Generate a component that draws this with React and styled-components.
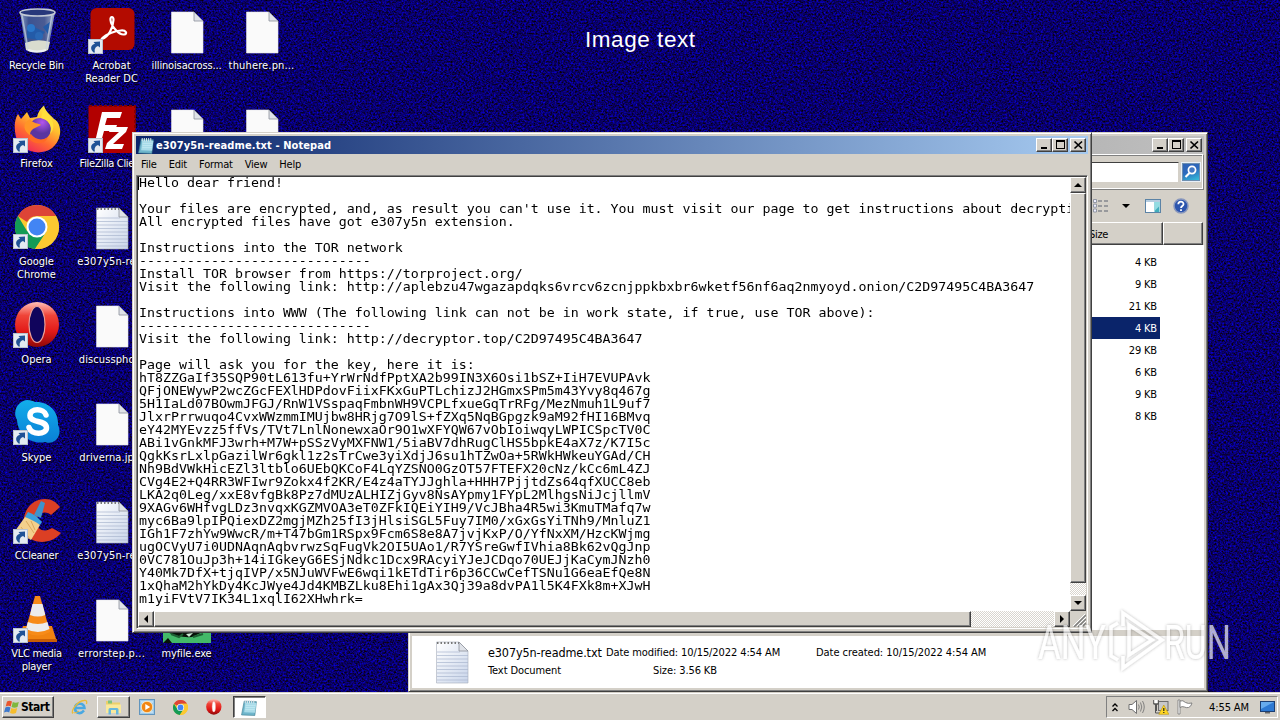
import React from "react";
import styled, { createGlobalStyle, css } from "styled-components";

const face = "#d4d0c8";
const ui = `"DejaVu Sans Condensed", "DejaVu Sans", sans-serif`;

const GlobalStyle = createGlobalStyle`
  * { box-sizing: border-box; }
  html, body { margin: 0; padding: 0; overflow: hidden; }
  svg { display: block; flex: none; }
`;

const raised = css`
  background: ${face};
  border: 1px solid;
  border-color: #fff #404040 #404040 #fff;
  box-shadow: inset -1px -1px #808080;
`;
const sunken = css`
  border: 1px solid;
  border-color: #808080 #fff #fff #808080;
`;

const Screen = styled.div`
  width: 1280px;
  height: 720px;
  display: flex;
  flex-direction: column;
  position: relative;
  overflow: hidden;
  background: #07005c;
  font: 11px/13px ${ui};
  color: #000;
  cursor: default;
`;
const Wallpaper = styled.svg`
  position: absolute;
  inset: 0;
`;
const Desktop = styled.main`
  flex: 1;
  position: relative;
`;
const IconGrid = styled.div`
  display: grid;
  grid-template-columns: repeat(4, 75px);
  grid-template-rows: repeat(7, 98px);
  margin-left: -1px;
`;
const Shortcut = styled.div`
  grid-column: ${(p) => p.$col};
  grid-row: ${(p) => p.$row};
  display: flex;
  flex-direction: column;
  align-items: center;
  padding-top: 7px;
  color: #fff;
  text-align: center;
  text-shadow: 1px 1px 1px #000;
`;
const Caption = styled.div`
  margin-top: 4px;
  white-space: pre;
  letter-spacing: ${(p) => p.$ls || 0}px;
`;
const Banner = styled.div`
  position: absolute;
  top: 26px;
  left: 585px;
  font: 22.5px/28px "Liberation Sans", sans-serif;
  letter-spacing: 0.55px;
  color: #fff;
  white-space: nowrap;
`;

const Window = styled.section`
  position: absolute;
  left: ${(p) => p.$x}px;
  top: ${(p) => p.$y}px;
  width: ${(p) => p.$w}px;
  height: ${(p) => p.$h}px;
  display: flex;
  flex-direction: column;
  background: ${face};
  border: 1px solid;
  border-color: ${face} #404040 #404040 ${face};
  box-shadow: inset 1px 1px #fff, inset -1px -1px #808080;
  padding: 3px;
`;
const TitleBar = styled.header`
  flex: none;
  height: 18px;
  display: flex;
  align-items: center;
  padding: 0 2px 0 2px;
  background: ${(p) =>
    p.$active
      ? "linear-gradient(90deg, #0a246a, #a6caf0)"
      : "linear-gradient(90deg, #808080, #c0c0c0)"};
  color: #fff;
`;
const Title = styled.h1`
  flex: 1;
  margin: 0 0 0 1px;
  font: bold 11px/13px ${ui};
  letter-spacing: 0.11px;
  white-space: nowrap;
`;
const CaptionButton = styled.button`
  ${raised}
  width: 16px;
  height: 14px;
  padding: 0;
  margin-left: ${(p) => (p.$gap ? 2 : 0)}px;
  display: grid;
  place-items: center;
`;
const MenuBar = styled.nav`
  flex: none;
  height: 21px;
  display: flex;
  align-items: center;
  gap: 12px;
  padding: 0 0 1px 5px;
`;
const MenuItem = styled.span`
  letter-spacing: -0.2px;
`;
const Editor = styled.div`
  flex: 1;
  display: grid;
  grid-template-columns: 1fr 16px;
  grid-template-rows: 1fr 16px;
  border: 1px solid;
  border-color: #808080 #fff #fff #808080;
  box-shadow: inset 1px 1px #404040, inset -1px -1px ${face};
  padding: 1px;
  min-height: 0;
`;
const Page = styled.div`
  background: #fff;
  overflow: hidden;
  padding: 0 0 0 1px;
  position: relative;
  min-width: 0;
`;
const Document = styled.pre`
  margin: 0;
  width: 785px;
  font: 11.4px/13px "DejaVu Sans Mono", monospace;
  transform: scaleX(1.1656);
  transform-origin: 0 0;
  color: #000;
`;
const Caret = styled.span`
  position: absolute;
  left: 0;
  top: 0;
  width: 1px;
  height: 13px;
  background: #000;
`;
const Track = styled.div`
  display: flex;
  flex-direction: ${(p) => (p.$vertical ? "column" : "row")};
  background: repeating-conic-gradient(#fff 0 25%, #d9d5ce 0 50%) 0 0 / 2px 2px;
`;
const ScrollButton = styled.button`
  ${raised}
  width: 16px;
  height: 16px;
  padding: 0;
  flex: none;
  display: grid;
  place-items: center;
`;
const Thumb = styled.div`
  ${raised}
  flex: 0 0 ${(p) => p.$size}px;
`;
const Spacer = styled.div`
  flex: 1;
`;
const Corner = styled.div`
  background: ${face};
  display: grid;
  place-items: end;
`;

const AddressRow = styled.div`
  flex: none;
  height: 36px;
  margin-top: 0;
  display: flex;
  align-items: center;
  justify-content: flex-end;
  gap: 2px;
  padding-right: 2px;
  ${sunken}
  border-color: #fff #808080 #808080 #fff;
  box-shadow: inset -1px -1px #fff, inset 0 1px #808080;
`;
const SearchBox = styled.div`
  width: 230px;
  height: 21px;
  background: #fff;
  ${sunken}
  border-color: #404040 ${face} ${face} #404040;
`;
const SearchButton = styled.div`
  width: 20px;
  height: 20px;
  display: grid;
  place-items: center;
  border: 1px solid #e8f0f8;
  outline: 1px solid #6d8fb0;
  outline-offset: -2px;
  background: linear-gradient(160deg, #2f62b4, #2b69bd 45%, #35c8dc);
`;
const ToolRow = styled.div`
  flex: none;
  height: 32px;
  display: flex;
  align-items: center;
  justify-content: flex-end;
  padding: 0 15px 1px 0;
`;
const ColumnRow = styled.div`
  flex: none;
  height: 23px;
  display: flex;
  justify-content: flex-end;
  padding-right: 1px;
`;
const ColumnHead = styled.div`
  ${raised}
  width: ${(p) => p.$w}px;
  padding: 5px 0 0 5px;
  letter-spacing: -0.3px;
`;
const FileList = styled.div`
  flex: none;
  height: 385px;
  background: #fff;
  padding: 6px 44px 0 0;
`;
const FileSize = styled.div`
  height: 22px;
  padding-right: 3px;
  line-height: 23px;
  text-align: right;
  letter-spacing: -0.15px;
  ${(p) => p.$selected && "background:#0a246a;color:#fff;"}
`;
const Details = styled.div`
  flex: 1;
  display: flex;
  align-items: flex-start;
  background: #fff;
  border-top: 6px solid ${face};
  padding: 1px 0 0 16px;
`;
const DetailColumn = styled.div`
  width: ${(p) => p.$w}px;
  margin-left: ${(p) => p.$ml || 0}px;
  padding-top: 5px;
  white-space: nowrap;
`;
const DetailLine = styled.div`
  height: 18px;
  line-height: 22px;
  padding-left: ${(p) => p.$pl || 0}px;
  font-size: ${(p) => p.$size || 11}px;
  letter-spacing: ${(p) => p.$ls ?? -0.1}px;
`;

const TaskBar = styled.footer`
  flex: none;
  height: 28px;
  position: relative;
  display: flex;
  align-items: center;
  background: ${face};
  box-shadow: inset 0 1px ${face}, inset 0 2px #fff;
  padding: 4px 2px 2px;
`;
const StartButton = styled.button`
  ${raised}
  width: 52px;
  height: 22px;
  display: flex;
  align-items: center;
  gap: 1px;
  padding: 0 0 0 1px;
  font: bold 12px/14px ${ui};
  letter-spacing: -0.45px;
  color: #000;
`;
const TaskButton = styled.div`
  width: ${(p) => (p.$framed ? 33 : 16)}px;
  height: 22px;
  margin-left: ${(p) => p.$ml}px;
  display: grid;
  place-items: center;
  ${(p) => p.$framed && raised}
  ${(p) =>
    p.$pressed &&
    css`
      background: #fff;
      border-color: #404040 #fff #fff #404040;
      box-shadow: inset 1px 1px #808080;
    `}
`;
const Tray = styled.div`
  ${sunken}
  width: 172px;
  height: 22px;
  display: flex;
  align-items: center;
  padding-left: 5px;
`;
const Clock = styled.span`
  margin: 0 10px 0 16px;
  width: 41px;
  white-space: nowrap;
  letter-spacing: -0.1px;
`;
const Watermark = styled.svg`
  position: absolute;
  left: 1032px;
  top: 602px;
`;

/* ---------- icons ---------- */

const Arrow = ({ y = 31 }) => (
  <g transform={`translate(0 ${y})`}>
    <rect x=".5" y=".5" width="14" height="14" fill="#e4eaf1" stroke="#b9c3ce" />
    <path d="M5.500 13.500C1.500 10 3 5.500 7 4.800L5.500 3 12 2.500 12 8.500 10 7C7 8 6 11 7 13.500Z" fill="#1f5296" />
  </g>
);

const BinIcon = () => (
  <svg width="48" height="48" viewBox="0 0 48 48">
    <defs>
      <linearGradient id="bin" x2="1">
        <stop offset="0" stopColor="#8ea3c4" /><stop offset=".25" stopColor="#3c5290" />
        <stop offset=".7" stopColor="#4a5b93" /><stop offset="1" stopColor="#9fb0cc" />
      </linearGradient>
    </defs>
    <path d="M7 5L13 43Q24 48 35 43L42 5Z" fill="url(#bin)" />
    <path d="M12 36L13 43Q24 48 35 43L37 35Q24 31 12 36Z" fill="#d9dccf" />
    <path d="M14 23q5-8 9-2l9 4-7 8-11-2zM30 20l7-5-2 12z" fill="#235ba8" />
    <circle cx="18" cy="21" r="4" fill="#2b77c8" /><circle cx="26" cy="29" r="4" fill="#2a68b4" />
    <path d="M9 8l6 34M39 8l-6 34" stroke="#c7d3e4" strokeWidth="1.500" fill="none" opacity=".7" />
    <ellipse cx="24.500" cy="5.500" rx="17.500" ry="3.500" fill="#27387b" stroke="#c3cad5" strokeWidth="1.600" />
    <path d="M15 43q9 3 18 0" stroke="#eef0f0" strokeWidth="2" fill="none" />
  </svg>
);
const AcrobatIcon = () => (
  <svg width="48" height="48" viewBox="0 0 48 48">
    <rect x="2.500" y="1" width="44" height="42" rx="6" fill="#b30b00" />
    <path d="M14 32C20 30 25 22 25.500 13C25.700 9 22 9 22.500 13C23 19 31 28 36 27.500C40 27 38 23 33 23.500C27 24 18 27 14.500 31C12 34 12 35 14 32Z" fill="none" stroke="#fff" strokeWidth="2.200" strokeLinejoin="round" />
    <Arrow y={32} />
  </svg>
);
const FirefoxIcon = ({ size = 48 }) => (
  <svg width={size} height={size} viewBox="0 0 48 48">
    <defs>
      <linearGradient id="ff" x1=".8" y1="0" x2=".2" y2="1">
        <stop offset="0" stopColor="#fff24a" /><stop offset=".35" stopColor="#ffc02e" />
        <stop offset=".65" stopColor="#ff6a30" /><stop offset="1" stopColor="#ee1d62" />
      </linearGradient>
      <radialGradient id="ffp" cx=".6" cy=".2"><stop offset="0" stopColor="#b455ee" /><stop offset="1" stopColor="#5a35a0" /></radialGradient>
    </defs>
    <path d="M5 9L8 14 14 7 17 13 24 12C25 7 28 3 31 .5C32 7 37 9 41 14C45 16 48 22 47 29C43 54 9 52 3 32C1 24 1 15 5 9Z" fill="url(#ff)" />
    <circle cx="27" cy="24" r="11" fill="url(#ffp)" />
    <path d="M17 14C20 19 26 18 28 20L20 24C18 26 16 28 18 31C10 26 9 18 17 14Z" fill="#ff9626" />
    <path d="M18 29C22 35 30 36 35 32C33 39 22 41 15 33Z" fill="#ff6a25" />
    <path d="M28 13C35 15 40 20 37 29C42 24 41 17 37 12L31 2Z" fill="#ffe03c" />
    <Arrow y={33} />
  </svg>
);
const FileZillaIcon = () => (
  <svg width="48" height="48" viewBox="0 0 48 48">
    <rect x=".5" y="1" width="47" height="47" fill="#b20000" />
    <path d="M1 1H47V48" fill="none" stroke="#850000" strokeWidth="2" strokeDasharray="3 2" />
    <path d="M14 7H34L32 13H19L17 20H29L27 26H16L13 37H7ZM23 22H40L38 27 25 39H36L34 44H17L19 38 31 27H21Z" fill="#fff" />
    <Arrow y={33} />
  </svg>
);
const ChromeIcon = ({ size = 48, link }) => (
  <svg width={size} height={size} viewBox={link ? "0 0 48 48" : "2 2 44 44"}>
    <circle cx="24" cy="24" r="22" fill="#fbc931" />
    <path d="M4.900 13A22 22 0 0 1 43.100 13H24A11 11 0 0 0 14 19Z" fill="#dd4437" />
    <path d="M4.900 13A22 22 0 0 0 22 46L33 29 24 24 14 28Z" fill="#139b56" />
    <path d="M33.500 29.500 22 46A22 22 0 0 0 43.100 13H24Z" fill="#fbc931" />
    <circle cx="24" cy="24" r="10.500" fill="#fff" /><circle cx="24" cy="24" r="8.500" fill="#4285f4" />
    {link && <Arrow y={31} />}
  </svg>
);
const OperaIcon = ({ size = 48, link }) => (
  <svg width={size} height={size} viewBox={link ? "0 0 48 48" : "2 1 45 46"}>
    <defs>
      <linearGradient id="op" x2="0" y2="1">
        <stop offset="0" stopColor="#ffc0b8" /><stop offset=".3" stopColor="#ef4438" />
        <stop offset=".65" stopColor="#e21a18" /><stop offset="1" stopColor="#8f0808" />
      </linearGradient>
    </defs>
    <ellipse cx="24" cy="23.500" rx="22" ry="22.500" fill="url(#op)" />
    <ellipse cx="24" cy="23.500" rx={link ? 8 : 5} ry={link ? 18 : 15} fill={link ? "#10045c" : "#fff"} stroke="#e9a098" strokeWidth="1.200" />
    {link && <Arrow y={32} />}
  </svg>
);
const SkypeIcon = () => (
  <svg width="48" height="48" viewBox="0 0 48 48">
    <defs><linearGradient id="sk" x2="0" y2="1"><stop offset="0" stopColor="#12aeea" /><stop offset="1" stopColor="#0a7fd6" /></linearGradient></defs>
    <path d="M14 1C18 1 20 2 22 3C35 2 46 12 45 26C50 36 42 47 32 43C18 46 5 36 4 21C-1 12 5 2 14 1Z" fill="url(#sk)" />
    <path d="M33 16C31 9 17 9 17 16.500C17 25 33.500 20 33.500 29C33.500 36 18 36 16 28.500" fill="none" stroke="#fff" strokeWidth="5.500" strokeLinecap="round" />
    <Arrow y={31} />
  </svg>
);
const CCleanerIcon = () => (
  <svg width="48" height="48" viewBox="0 0 48 48">
    <path d="M47 10L38 18C32 13 24 16 23.500 24C23 33 32 36 39 31L48 36C39 47 21 48 14 38C5 21 15 2 32 2C39 2 43 5 47 10Z" fill="#db3f24" />
    <path d="M28 4L32 6 28 21 21 18Z" fill="#3f93cb" />
    <path d="M15 15Q22 17 29 25L27 28Q18 24 12 20Z" fill="#3aa0dd" />
    <path d="M12 20Q22 24 27 28L18 43 2 34Z" fill="#f3d08c" />
    <path d="M8 30l9 12M13 24l8 12M18 24l4 9" stroke="#dba85c" fill="none" />
    <Arrow y={32} />
  </svg>
);
const VlcIcon = () => (
  <svg width="48" height="48" viewBox="0 0 48 48">
    <path d="M10 31H39L44 47H4Z" fill="#f08310" />
    <path d="M4 44H44V47H4Z" fill="#c95e05" />
    <path d="M22 1H27L37 37Q25 44 12 37Z" fill="#f78b18" />
    <path d="M19.500 9H29.500L32.300 20Q25 23 17 20ZM14.800 27Q25 31 34.500 27L36.500 34Q25 40 13 34Z" fill="#ececec" />
    <Arrow y={33} />
  </svg>
);
const FileIcon = ({ lined }) => (
  <svg width="48" height="48" viewBox="0 0 48 48">
    <defs><linearGradient id="ln" x2="1" y2="1"><stop offset="0" stopColor="#fff" /><stop offset="1" stopColor="#c9d5ea" /></linearGradient></defs>
    <path d="M8.500 5H31L40 14V46H8.500Z" fill={lined ? "url(#ln)" : "#fafafa"} stroke={lined ? "#a5abb8" : "#e4e4ea"} strokeWidth=".6" />
    {lined && <path d="M9 15H32M9 18.500H40M9 22H40M9 25.500H40M9 29H40M9 32.500H40M9 36H40M9 39.500H40M9 43H40" stroke="#a9b6cf" strokeWidth=".7" />}
    {lined && <path d="M9 6H31" stroke="#777" strokeWidth="2" strokeDasharray="1.500 2" />}
    <path d="M31 5V14H40Z" fill="#dfe2e8" stroke="#8b909a" strokeWidth=".8" />
  </svg>
);
const ExeIcon = () => (
  <svg width="48" height="48" viewBox="0 0 48 48">
    <rect width="48" height="48" fill="#43b968" />
    <path d="M4 37Q16 43 29 42L44 35 31 36 20 37ZM0 48L5 43 9 48Z" fill="#071109" />
    <path d="M8 39l8 3 4-3M30 42l10-3" stroke="#1d5f33" strokeWidth="2" fill="none" />
    <path d="M23 39l7-1-4 4z" fill="#c9e8d2" />
  </svg>
);
const NotepadIcon = ({ size = 16 }) => (
  <svg width={size} height={size} viewBox="0 0 16 16">
    <path d="M3 2L14.500 2.500 13 15.500 .5 15Z" fill="#6fb6cc" stroke="#407f92" strokeWidth=".6" />
    <path d="M4 3.500L14.500 3.800 13.200 13 3 12.500Z" fill="#a8dbe8" />
    <path d="M4.500 6H13.500M4.300 8H13.200M4 10H13" stroke="#c9eef5" strokeWidth=".6" />
    <path d="M4 1v3M6 1v3M8 1v3M10 1v3M12 1v3" stroke="#e5e9ec" strokeWidth=".9" />
  </svg>
);
const Glyph = {
  min: <path d="M2 8H8" stroke="#000" strokeWidth="2" />,
  max: <path d="M1 0H10V9H1ZM2 2V8H9V2Z" fill="#000" fillRule="evenodd" />,
  close: <path d="M1.500 1.500L9 8.500M9 1.500L1.500 8.500" stroke="#000" strokeWidth="1.700" />,
};
const Controls = () =>
  ["min", "max", "close"].map((k) => (
    <CaptionButton key={k} $gap={k === "close"}>
      <svg width="11" height="10">{Glyph[k]}</svg>
    </CaptionButton>
  ));
const Tri = ({ r }) => (
  <svg width="8" height="8" viewBox="0 0 8 8">
    <path d="M4 2L8 6H0Z" transform={`rotate(${r} 4 4)`} />
  </svg>
);
const MagnifierIcon = () => (
  <svg width="14" height="14" viewBox="0 0 14 14">
    <circle cx="8" cy="5" r="3.600" fill="#4379c3" stroke="#fff" strokeWidth="1.700" />
    <path d="M5.500 8L1.500 12" stroke="#fff" strokeWidth="2.200" />
  </svg>
);
const ViewIcon = () => (
  <svg width="16" height="14" viewBox="0 0 16 14">
    <path d="M.5 .5h3v3h-3zM.5 5.200h3v3h-3zM.5 10h3v3h-3z" fill="#eef" stroke="#7f8796" strokeWidth=".8" />
    <path d="M5 2H9M11 2H15M5 7H9M11 7H15M5 12H9M11 12H15" stroke="#5c6270" strokeWidth="1" />
  </svg>
);
const PaneIcon = () => (
  <svg width="16" height="14" viewBox="0 0 16 14">
    <rect x=".5" y=".5" width="15" height="13" fill="#fff" stroke="#5b83a6" />
    <path d="M1 2H15" stroke="#b6cde0" strokeWidth="2" />
    <rect x="9.500" y="3" width="5" height="10" fill="#42aebd" />
    <path d="M9.500 3h5v4l-5 5z" fill="#93dce2" />
  </svg>
);
const HelpIcon = () => (
  <svg width="16" height="16" viewBox="0 0 16 16">
    <circle cx="8" cy="8" r="7" fill="#2c55ae" stroke="#8897bd" strokeWidth="1.500" />
    <path d="M5.300 6.300C5.300 2.800 10.700 2.900 10.500 6.200C10.400 8 8 8 8 10M8 11.300V13" fill="none" stroke="#fff" strokeWidth="1.800" />
  </svg>
);
const WindowsLogo = () => (
  <svg width="16" height="16" viewBox="0 0 16 16">
    <path d="M3 2.500Q5.500 1 8 2.500L6.700 7.500Q4.500 6 1.700 7.500Z" fill="#e9562c" />
    <path d="M8.800 3Q11.500 4.500 14.800 3L13.500 8Q10.500 9.300 7.500 8Z" fill="#7fb73c" />
    <path d="M1.400 8.500Q4 7 6.500 8.500L5.200 13.500Q3 12 0 13.500Z" fill="#3d79cc" />
    <path d="M7.300 9Q10 10.300 13.200 9L12 14Q9 15.300 6 14Z" fill="#f6bd2c" />
  </svg>
);
const IeIcon = () => (
  <svg width="17" height="17" viewBox="0 0 17 17">
    <path d="M13 11.500C9 16.500 3.500 13.500 4 8.500C4.600 3.500 13 3 13.500 9H5" fill="none" stroke="#49a8e2" strokeWidth="2.500" />
    <path d="M2 14.500C-1 13 6 2 13 1.500C16 1 16 3 15.500 5" fill="none" stroke="#e9bb3a" strokeWidth="1.300" />
    <path d="M2.500 13.500C4 14.500 6.500 13 8 12" fill="none" stroke="#e9bb3a" />
  </svg>
);
const FolderIcon = () => (
  <svg width="17" height="16" viewBox="0 0 17 16">
    <path d="M1 2H6L7.500 3.500H15V13H1Z" fill="#eccf6a" />
    <path d="M3 1.500h4v3H3z" fill="#7fc37b" /><path d="M1 5.500H16V14H1Z" fill="#fae99b" />
    <path d="M3.500 15.500V10.500Q3.500 9 5 9H12Q13.500 9 13.500 10.500V15.500H11V11H6V15.500Z" fill="#69b8dc" />
  </svg>
);
const MediaIcon = () => (
  <svg width="16" height="16" viewBox="0 0 16 16">
    <rect x=".5" y=".5" width="15" height="15" fill="#9fcbea" stroke="#6295bd" />
    <path d="M2 3H14M2 13H14" stroke="#dff0fb" />
    <circle cx="8" cy="8" r="5.700" fill="#f18613" stroke="#fff0c8" strokeWidth=".8" />
    <path d="M6.300 5L11.200 8 6.300 11Z" fill="#fff" />
  </svg>
);
const ChevronIcon = () => (
  <svg width="6" height="9" viewBox="0 0 6 9">
    <path d="M.5 3.500L3 1 5.500 3.500M.5 8L3 5.500 5.500 8" fill="none" stroke="#000" strokeWidth="1.300" />
  </svg>
);
const SpeakerIcon = () => (
  <svg width="17" height="16" viewBox="0 0 17 16">
    <path d="M1 5.500H4L8.500 1.500V14.500L4 10.500H1Z" fill="#fff" stroke="#6f6f6f" />
    <path d="M10.500 5.500Q12 8 10.500 10.500M12.500 3.500Q15 8 12.500 12.500M14.500 2Q18 8 14.500 14" fill="none" stroke="#777" strokeWidth=".9" />
  </svg>
);
const NetworkIcon = () => (
  <svg width="16" height="16" viewBox="0 0 16 16">
    <rect x="5.500" y="2.500" width="9.500" height="9" fill="#c8c8c8" stroke="#6d6d6d" />
    <path d="M.7 1V5H2.500V14H7M5.300 1V5H3.500V12M.7 5H5.300" fill="none" stroke="#555" />
    <path d="M1.500 1h3v3h-3z" fill="#fff" />
    <path d="M10.800 6L15.800 15.300H5.800Z" fill="#ffd723" stroke="#ba9308" strokeWidth=".6" />
    <path d="M10.800 9V12M10.800 13V14" stroke="#222" strokeWidth="1.200" />
  </svg>
);
const FlagIcon = () => (
  <svg width="16" height="16" viewBox="0 0 16 16">
    <path d="M1 1H3V15H1Z" fill="#fff" stroke="#777" strokeWidth=".8" />
    <path d="M3 2Q6 .8 8.500 3.500Q11 5 15 4Q14 8 11.500 8.500Q9 9 7.500 8Q5 7 3 8.500Z" fill="#fff" stroke="#777" strokeWidth=".9" />
  </svg>
);
const MonitorIcon = () => (
  <svg width="15" height="13" viewBox="0 0 15 13">
    <rect x=".5" y=".5" width="14" height="10" fill="#2d79d2" stroke="#1b3e72" />
    <path d="M1 1H14L1 8Z" fill="#66abed" /><path d="M5 11H10V12.500H5Z" fill="#666" />
  </svg>
);

/* ---------- content ---------- */

const desktopItems = [
  [1, 1, <BinIcon />, "Recycle Bin", -0.2],
  [1, 2, <FirefoxIcon />, "Firefox"],
  [1, 3, <ChromeIcon link />, "Google\nChrome"],
  [1, 4, <OperaIcon link />, "Opera"],
  [1, 5, <SkypeIcon />, "Skype"],
  [1, 6, <CCleanerIcon />, "CCleaner", -0.2],
  [1, 7, <VlcIcon />, "VLC media\nplayer", -0.3],
  [2, 1, <AcrobatIcon />, "Acrobat\nReader DC"],
  [2, 2, <FileZillaIcon />, "FileZilla Client", -0.35],
  [2, 3, <FileIcon lined />, "e307y5n-re...", 0.15],
  [2, 4, <FileIcon />, "discusspho...", 0.1],
  [2, 5, <FileIcon />, "driverna.jp...", 0.1],
  [2, 6, <FileIcon lined />, "e307y5n-re...", 0.15],
  [2, 7, <FileIcon />, "errorstep.p...", 0.2],
  [3, 1, <FileIcon />, "illinoisacross...", -0.15],
  [3, 2, <FileIcon />, ""],
  [3, 7, <ExeIcon />, "myfile.exe", -0.1],
  [4, 1, <FileIcon />, "thuhere.pn...", 0.15],
  [4, 2, <FileIcon />, ""],
];

const note = `Hello dear friend!

Your files are encrypted, and, as result you can't use it. You must visit our page to get instructions about decryption
All encrypted files have got e307y5n extension.

Instructions into the TOR network
-----------------------------
Install TOR browser from https://torproject.org/
Visit the following link: http://aplebzu47wgazapdqks6vrcv6zcnjppkbxbr6wketf56nf6aq2nmyoyd.onion/C2D97495C4BA3647

Instructions into WWW (The following link can not be in work state, if true, use TOR above):
-----------------------------
Visit the following link: http://decryptor.top/C2D97495C4BA3647

Page will ask you for the key, here it is:
hT8ZZGaIf35SQP90tL613fu+YrWrNdfPptXA2b99IN3X6Osi1bSZ+IiH7EVUPAvk
QFjONEWywP2wcZGcFEXlHDPdovFiixFKxGuPTLchizJ2HGmxSPm5m43Yvy8q467g
5H1IaLd07BOwmJFGJ/RnW1VSspaqFmbnWH9VCPLfxueGqTrRFg/MezNmuh1L9uf7
JlxrPrrwuqo4CvxWWzmmIMUjbw8HRjg7O9lS+fZXq5NqBGpgzk9aM92fHI16BMvq
eY42MYEvzz5ffVs/TVt7LnlNonewxaOr9O1wXFYQW67vObIoiwqyLWPICSpcTV0C
ABi1vGnkMFJ3wrh+M7W+pSSzVyMXFNW1/5iaBV7dhRugClHS5bpkE4aX7z/K7I5c
QgkKsrLxlpGazilWr6gkl1z2sTrCwe3yiXdjJ6su1hTZwOa+5RWkHWkeuYGAd/CH
Nh9BdVWkHicEZl3ltblo6UEbQKCoF4LqYZSNO0GzOT57FTEFX20cNz/kCc6mL4ZJ
CVg4E2+Q4RR3WFIwr9Zokx4f2KR/E4z4aTYJJghla+HHH7PjjtdZs64qfXUCC8eb
LKA2q0Leg/xxE8vfgBk8Pz7dMUzALHIZjGyv8NsAYpmy1FYpL2MlhgsNiJcjllmV
9XAGv6WHfvgLDz3nvqxKGZMVOA3eT0ZFkIQEiYIH9/VcJBha4R5wi3KmuTMafq7w
myc6Ba9lpIPQiexDZ2mgjMZh25fI3jHlsiSGL5Fuy7IM0/xGxGsYiTNh9/MnluZ1
IGh1F7zhYw9WwcR/m+T47bGm1RSpx9Fcm6S8e8A7jvjKxP/O/YfNxXM/HzcKWjmg
ugOCVyU7i0UDNAqnAqbvrwzSqFugVk2OI5UAo1/R7YSreGwfIVhia8Bk62vQgJnp
0VC781OuJp3h+14iIGkeyG6ESjNdkc1Dcx9RAcyiYJeJCDqo70UEJjKaCymJNzh0
Y40Mk7DfX+tjqIVP/x5NJuWVFwE6wqi1kETdTir6p36CCwCefTSNu1G6eaEfQe8N
1xQhaM2hYkDy4KcJWye4Jd4KMBZLku8Ehi1gAx3Qj39a8dvPA1l5K4FXk8m+XJwH
m1yiFVtV7IK34L1xqlI62XHwhrk=`;

const sizes = ["4 KB", "9 KB", "21 KB", "4 KB", "29 KB", "6 KB", "9 KB", "8 KB"];

const Explorer = () => (
  <Window $x={408} $y={132} $w={800} $h={560}>
    <TitleBar>
      <Title />
      <Controls />
    </TitleBar>
    <AddressRow>
      <SearchBox />
      <SearchButton><MagnifierIcon /></SearchButton>
    </AddressRow>
    <ToolRow>
      <ViewIcon />
      <svg width="36" height="8"><path d="M13 2H21L17 6Z" /></svg>
      <PaneIcon />
      <svg width="12" height="1" />
      <HelpIcon />
    </ToolRow>
    <ColumnRow>
      <ColumnHead $w={80}>Size</ColumnHead>
      <ColumnHead $w={40} />
    </ColumnRow>
    <FileList>
      {sizes.map((s, i) => (
        <FileSize key={i} $selected={i === 3}>{s}</FileSize>
      ))}
    </FileList>
    <Details>
      <FileIcon lined />
      <DetailColumn $w={118} $ml={12}>
        <DetailLine $size={12.5} $ls={-0.1}>e307y5n-readme.txt</DetailLine>
        <DetailLine>Text Document</DetailLine>
      </DetailColumn>
      <DetailColumn $w={210}>
        <DetailLine>Date modified: 10/15/2022 4:54 AM</DetailLine>
        <DetailLine $pl={47}>Size: 3.56 KB</DetailLine>
      </DetailColumn>
      <DetailColumn $w={190}>
        <DetailLine $ls={-0.05}>Date created: 10/15/2022 4:54 AM</DetailLine>
      </DetailColumn>
    </Details>
  </Window>
);

const Notepad = () => (
  <Window $x={132} $y={132} $w={960} $h={501}>
    <TitleBar $active>
      <NotepadIcon size={17} />
      <Title>e307y5n-readme.txt - Notepad</Title>
      <Controls />
    </TitleBar>
    <MenuBar>
      {["File", "Edit", "Format", "View", "Help"].map((m) => (
        <MenuItem key={m}>{m}</MenuItem>
      ))}
    </MenuBar>
    <Editor>
      <Page>
        <Caret />
        <Document>{note}</Document>
      </Page>
      <Track $vertical>
        <ScrollButton><Tri r={0} /></ScrollButton>
        <Thumb $size={390} />
        <Spacer />
        <ScrollButton><Tri r={180} /></ScrollButton>
      </Track>
      <Track>
        <ScrollButton><Tri r={270} /></ScrollButton>
        <Thumb $size={817} />
        <Spacer />
        <ScrollButton><Tri r={90} /></ScrollButton>
      </Track>
      <Corner>
        <svg width="13" height="13"><path d="M1 13L13 1M5 13L13 5M9 13L13 9" stroke="#808080" strokeWidth="1.500" /><path d="M0 12L12 0M4 12L13 3M8 12L13 7" stroke="#fff" /></svg>
      </Corner>
    </Editor>
  </Window>
);

export default function App() {
  return (
    <Screen>
      <GlobalStyle />
      <Wallpaper width="1280" height="720">
        <filter id="grain" x="0" y="0" width="100%" height="100%" colorInterpolationFilters="sRGB">
          <feTurbulence type="fractalNoise" baseFrequency=".53 .57" numOctaves="3" seed="7" />
          <feColorMatrix values="0 .1 0 0 -.015  0 0 0 0 0  1.350 0 0 0 -.26  0 0 0 0 1" />
        </filter>
        <rect width="1280" height="720" filter="url(#grain)" />
      </Wallpaper>
      <Desktop>
        <IconGrid>
          {desktopItems.map(([c, r, icon, label, ls]) => (
            <Shortcut key={`${c}-${r}`} $col={c} $row={r}>
              {icon}
              <Caption $ls={ls}>{label}</Caption>
            </Shortcut>
          ))}
        </IconGrid>
        <Banner>Image text</Banner>
        <Explorer />
        <Notepad />
      </Desktop>
      <TaskBar>
        <StartButton><WindowsLogo />Start</StartButton>
        <TaskButton $ml={17}><IeIcon /></TaskButton>
        <TaskButton $framed $ml={10}><FolderIcon /></TaskButton>
        <TaskButton $ml={9}><MediaIcon /></TaskButton>
        <TaskButton $ml={17}><ChromeIcon size={15} /></TaskButton>
        <TaskButton $ml={18}><OperaIcon size={16} /></TaskButton>
        <TaskButton $framed $pressed $ml={11}><NotepadIcon size={17} /></TaskButton>
        <Spacer />
        <Tray>
          <ChevronIcon />
          <svg width="10" height="1" />
          <SpeakerIcon />
          <svg width="8" height="1" />
          <NetworkIcon />
          <svg width="8" height="1" />
          <FlagIcon />
          <Clock>4:55 AM</Clock>
          <MonitorIcon />
        </Tray>
      </TaskBar>
      <Watermark width="204" height="76" viewBox="0 0 204 76">
        <filter id="halo" x="-10%" y="-20%" width="120%" height="140%">
          <feDropShadow dx="0" dy="0" stdDeviation="1.600" floodColor="#444" floodOpacity=".6" />
        </filter>
        <g filter="url(#halo)" opacity=".68" fill="#fff">
          <g fontFamily="Roboto, sans-serif" fontSize="49">
            <text x="6" y="57" textLength="68" lengthAdjust="spacingAndGlyphs">ANY</text>
            <text x="132" y="57" textLength="67" lengthAdjust="spacingAndGlyphs">RUN</text>
          </g>
          <path d="M91 24V11L130 38 91 66V54M86 21L79 25V54L86 58M97 23V53L120 38Z" fill="none" stroke="#fff" strokeWidth="3.500" />
        </g>
      </Watermark>
    </Screen>
  );
}
